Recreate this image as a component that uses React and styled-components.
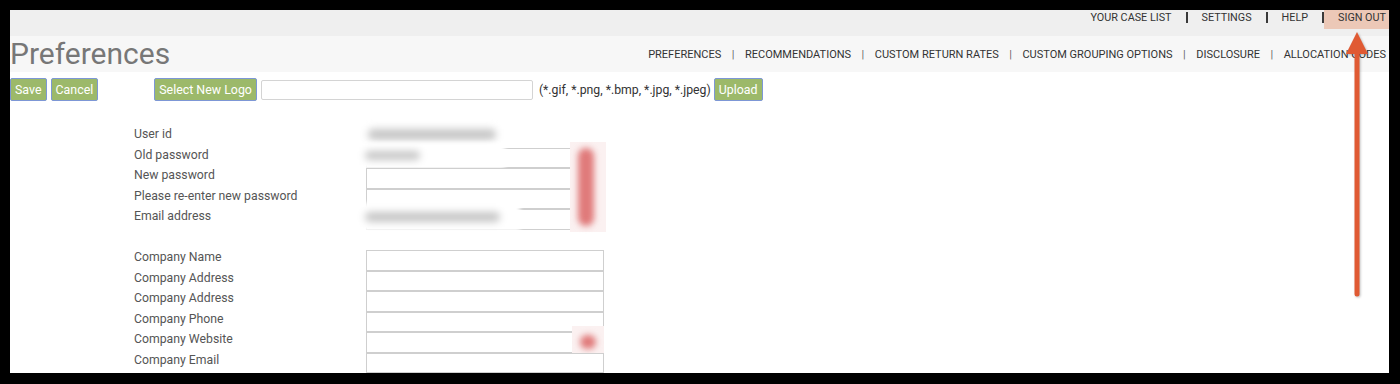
import React from 'react'
import styled, { createGlobalStyle } from 'styled-components'

const GlobalStyle = createGlobalStyle`
  body {
    margin: 0;
    background: #000;
    font-family: Roboto, "Liberation Sans", Arial, sans-serif;
  }
`

const topLinks = ['YOUR CASE LIST', 'SETTINGS', 'HELP', 'SIGN OUT']
const navLinks = ['PREFERENCES', 'RECOMMENDATIONS', 'CUSTOM RETURN RATES', 'CUSTOM GROUPING OPTIONS', 'DISCLOSURE', 'ALLOCATION CODES']

const accountFields = [
  { label: 'User id', noInput: true },
  { label: 'Old password' },
  { label: 'New password' },
  { label: 'Please re-enter new password' },
  { label: 'Email address' },
]

const companyFields = ['Company Name', 'Company Address', 'Company Address', 'Company Phone', 'Company Website', 'Company Email']

const App = () => {
  return (
    <>
      <GlobalStyle />
      <Frame>
        <Page>
          <TopBar>
            {topLinks.map((l, i) => (
              <React.Fragment key={l}>
                {i > 0 && <TopSep />}
                <TopLink $active={l === 'SIGN OUT'} $last={i === topLinks.length - 1}>{l}</TopLink>
              </React.Fragment>
            ))}
          </TopBar>
          <TitleBar>
            <Title>Preferences</Title>
            <Nav>
              {navLinks.map((l, i) => (
                <React.Fragment key={l}>
                  {i > 0 && <NavSep>|</NavSep>}
                  <NavLink>{l}</NavLink>
                </React.Fragment>
              ))}
            </Nav>
          </TitleBar>

          <Toolbar>
            <Button>Save</Button>
            <Button>Cancel</Button>
            <LogoGroup>
              <Button>Select New Logo</Button>
              <FileInput />
              <Hint>(*.gif, *.png, *.bmp, *.jpg, *.jpeg)</Hint>
              <Button>Upload</Button>
            </LogoGroup>
          </Toolbar>

          <Form>
            {accountFields.map((f) => (
              <Row key={f.label}>
                <Label>{f.label}</Label>
                <Field>
                  {!f.noInput && <Input />}
                  {f.label === 'User id' && <Redact $w={150} $h={18} $left={-8} $top={-2}><Smudge $w={128} $h={11} /></Redact>}
                  {f.label === 'Old password' && <Redact $w={150} $h={26} $left={-11} $top={-5}><Smudge $w={55} $h={9} /></Redact>}
                  {f.label === 'Email address' && <Redact $w={165} $h={28} $left={-11} $top={-6}><Smudge $w={135} $h={10} /></Redact>}
                </Field>
              </Row>
            ))}
            <Row />
            {companyFields.map((l, i) => (
              <Row key={l + i}>
                <Label>{l}</Label>
                <Field>
                  <Input />
                  {l === 'Company Website' && <Marker $top={-6} $h={32} $dot />}
                </Field>
              </Row>
            ))}
            <RedMarks />
          </Form>

          <Arrow width="30" height="270" viewBox="0 0 30 270">
            <line x1="15" y1="18" x2="15" y2="262" stroke="#e05a33" strokeWidth="5" strokeLinecap="round" />
            <polygon points="15,0 4,22 26,22" fill="#e05a33" />
          </Arrow>
        </Page>
      </Frame>
    </>
  )
}

export default App

const Frame = styled.div`
padding: 10px 11px 11px 10px;
`

const Page = styled.div`
position: relative;
background: #fff;
height: 363px;
overflow: hidden;
`

const TopBar = styled.div`
display: flex;
justify-content: flex-end;
align-items: flex-start;
height: 26px;
background: #efefef;
`

const TopLink = styled.div`
font-size: 10.8px;
line-height: 13px;
color: #333;
padding: 1px ${p => p.$last ? '3px' : '14px'} 5px 14px;
background: ${p => p.$active ? '#ecc8b7' : 'transparent'};
`

const TopSep = styled.div`
width: 2px;
height: 11px;
margin-top: 2px;
background: #3a3a3a;
`

const TitleBar = styled.div`
display: flex;
align-items: center;
height: 36px;
background: #f7f7f7;
`

const Title = styled.h1`
margin: 0 auto 0 0;
font-size: 30px;
font-weight: 400;
color: #777;
line-height: 36px;
`

const Nav = styled.div`
display: flex;
align-items: center;
padding-right: 3px;
`

const NavLink = styled.span`
font-size: 11px;
color: #333;
`

const NavSep = styled.span`
font-size: 11px;
color: #666;
margin: 0 10.5px;
`

const Toolbar = styled.div`
display: flex;
align-items: center;
gap: 4px;
padding-top: 6px;
`

const LogoGroup = styled.div`
display: flex;
align-items: center;
gap: 4px;
margin-left: 52px;
`

const Button = styled.button`
height: 23px;
padding: 0 4px;
background: #9cb96a;
color: #fff;
border: 1px solid #7d97d6;
border-radius: 2px;
font-family: Roboto, "Liberation Sans", Arial, sans-serif;
font-size: 12.4px;
cursor: pointer;
`

const FileInput = styled.div`
width: 272px;
height: 20px;
box-sizing: border-box;
border: 1px solid #d4d4d4;
border-radius: 2px;
background: #fff;
`

const Hint = styled.span`
font-size: 12.25px;
color: #333;
margin: 0 -1px 0 2px;
`

const Form = styled.div`
position: relative;
margin: 26px 0 0 124px;
width: 480px;
`

const Row = styled.div`
display: grid;
grid-template-columns: 232px 238px;
height: 20.5px;
`

const Label = styled.div`
font-size: 12.25px;
line-height: 14px;
color: #555;
`

const Field = styled.div`
position: relative;
`

const Input = styled.div`
height: 20.5px;
box-sizing: border-box;
border: 1px solid #cfcfcf;
background: #fff;
`

const Redact = styled.div`
position: absolute;
left: ${p => p.$left}px;
top: ${p => p.$top || 0}px;
width: ${p => p.$w}px;
height: ${p => p.$h}px;
display: flex;
align-items: center;
padding-left: 10px;
box-sizing: border-box;
background: #fff;
filter: blur(2px);
`

const Smudge = styled.div`
width: ${p => p.$w}px;
height: ${p => p.$h}px;
background: #c6c6c6;
border-radius: 5px;
filter: blur(3px);
`

const Marker = styled.div`
position: absolute;
right: 0;
top: ${p => p.$top}px;
width: 32px;
height: ${p => p.$h}px;
background: #fbf1f1;
&::after {
  content: '';
  position: absolute;
  left: 8px;
  top: ${p => p.$dot ? '9px' : '6px'};
  width: 16px;
  height: ${p => p.$dot ? '14px' : 'calc(100% - 12px)'};
  border-radius: 8px;
  background: #e07a7a;
  filter: blur(3px);
}
`

const RedMarks = styled(Marker).attrs({ $top: 15, $h: 90 })`
top: 15px;
right: 8px;
width: 36px;
`

const Arrow = styled.svg`
position: absolute;
right: 17px;
top: 22px;
filter: drop-shadow(1px 1px 1px rgba(0,0,0,0.25));
`
